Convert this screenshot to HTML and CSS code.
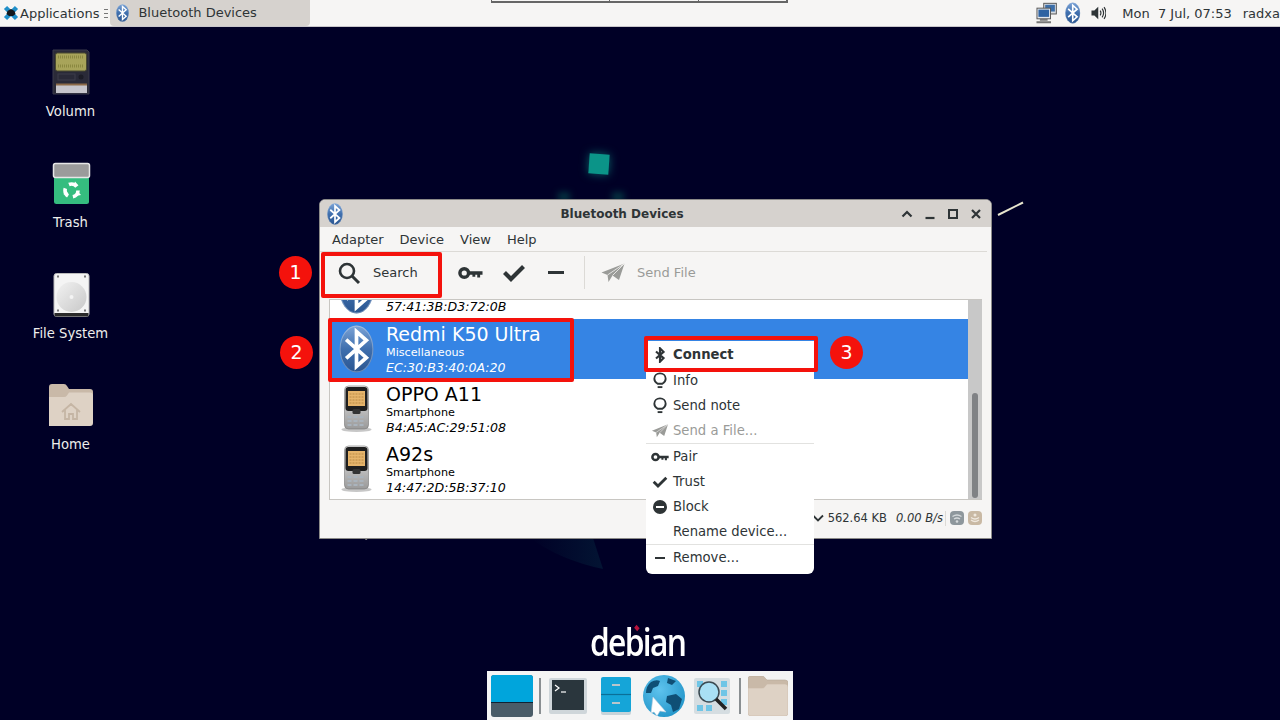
FILE: index.html
```html
<!DOCTYPE html>
<html lang="en">
<head>
    <meta charset="UTF-8">
    <meta name="viewport" content="width=device-width, initial-scale=1.0">
    <title>Bluetooth Devices</title>
    <link rel="stylesheet" href="styles.css">
</head>
<body>

    <!-- shared icons -->
    <svg class="defs" width="0" height="0">
        <defs>
            <linearGradient id="btBlue" x1="0" y1="0" x2="0" y2="1">
                <stop offset="0" stop-color="#7ba3d6"/>
                <stop offset="0.5" stop-color="#3f6fae"/>
                <stop offset="1" stop-color="#2a5590"/>
            </linearGradient>
            <linearGradient id="metal" x1="0" y1="0" x2="0" y2="1">
                <stop offset="0" stop-color="#e8e8e8"/>
                <stop offset="1" stop-color="#9a9a9a"/>
            </linearGradient>
            <linearGradient id="disc" x1="0" y1="0" x2="1" y2="1">
                <stop offset="0" stop-color="#f2f2f2"/>
                <stop offset="1" stop-color="#c8c8c8"/>
            </linearGradient>
            <linearGradient id="wpFade" x1="0" y1="0" x2="1" y2="0">
                <stop offset="0" stop-color="#000026"/>
                <stop offset="1" stop-color="#031433"/>
            </linearGradient>
            <radialGradient id="globe" cx="0.4" cy="0.35" r="0.8">
                <stop offset="0" stop-color="#5ec3ee"/>
                <stop offset="1" stop-color="#1b8fc4"/>
            </radialGradient>
        </defs>
        <symbol id="bt-badge" viewBox="0 0 32 44">
            <ellipse cx="16" cy="22" rx="15.5" ry="21.5" fill="url(#btBlue)"/>
            <ellipse cx="16" cy="22" rx="15" ry="21" fill="none" stroke="#dfe8f4" stroke-opacity=".35"/>
            <path d="M6.5 13.5 25 30 16 38V6l9 8L6.5 30.5" fill="none" stroke="#fff" stroke-width="3.4"/>
        </symbol>
        <symbol id="bt-rune" viewBox="0 0 12 18">
            <path d="M1.5 5 10 12.5 6 16.5V1.5l4 4L1.5 13" fill="none" stroke="currentColor" stroke-width="2.400"/>
        </symbol>
        <symbol id="phone" viewBox="0 0 32 48">
            <ellipse cx="16" cy="44.5" rx="15" ry="2.5" fill="#999" opacity=".55"/>
            <rect x="4" y="1" width="24" height="43" rx="4" fill="url(#metal)" stroke="#777" stroke-width=".6"/>
            <rect x="5" y="2" width="22" height="24" rx="3" fill="#1f1f1f"/>
            <rect x="7.500" y="6" width="17" height="15" fill="#e6b56c"/>
            <path d="M9 9h14M9 12h14M9 15h14M9 18h14" stroke="#b98a45" stroke-dasharray="2 1"/>
            <rect x="12" y="24" width="8" height="5" rx="1.500" fill="#333"/>
            <path d="M7 32h18M7 36h18M7 40h18" stroke="#aab4bd" stroke-width="2" stroke-dasharray="4 2"/>
        </symbol>
        <symbol id="bulb" viewBox="0 0 16 18">
            <path d="M5.5 12.5C3 11 2 9.500 2 7.200 2 4 4.600 1.500 8 1.500s6 2.500 6 5.700c0 2.300-1 3.800-3.500 5.300z" fill="none" stroke="#2e3436" stroke-width="2"/>
            <path d="M5.500 16h5" stroke="#2e3436" stroke-width="2"/>
        </symbol>
        <symbol id="key" viewBox="0 0 26 14">
            <circle cx="6.500" cy="7" r="4.500" fill="none" stroke="currentColor" stroke-width="3.600"/>
            <path d="M10 5.200h15.500v3.600h-2.500v3h-3v-3h-2v2h-3v-2H10z" fill="currentColor"/>
        </symbol>
        <symbol id="check" viewBox="0 0 24 18">
            <path d="M2.500 8.500 9 15 21.500 2.500" fill="none" stroke="currentColor" stroke-width="4.200"/>
        </symbol>
        <symbol id="plane" viewBox="0 0 24 20">
            <path d="M0.500 9.500 23.500 0.500 18 17 11.500 12.500 7.500 19 6.500 12z" fill="currentColor"/>
            <path d="M6.500 12 23.500 0.500 11.500 12.500" fill="none" stroke="#f6f5f4" stroke-width=".8"/>
        </symbol>
    </svg>

    <div class="desktop">
        <header class="panel">
            <div class="app-btn">
                <svg class="app-logo" viewBox="0 0 16 16">
                    <path d="M2.500 2.500 13.500 13.500M13.500 2.500 2.500 13.500" stroke="#1f8fc9" stroke-width="4.500"/>
                    <path d="M4.500 6 8 4l3.500 2 1 3-2.500 2H6L3.500 9z" fill="#14181c"/>
                </svg>
                <span>Applications</span>
            </div>
            <span class="app-more"></span>
            <div class="task-btn">
                <svg class="task-icon"><use href="#bt-badge"/></svg>
                <span>Bluetooth Devices</span>
            </div>
            <div class="workspace-strip">
                <span></span><span></span><span></span>
            </div>
            <div class="tray">
                <svg class="tray-net" viewBox="0 0 22 22">
                    <rect x="8" y="1" width="13" height="11" fill="#d8dde3" stroke="#555"/>
                    <rect x="9.500" y="2.500" width="10" height="7" fill="#3c6ea8"/>
                    <rect x="1" y="6" width="14" height="11" fill="#e4e8ec" stroke="#555"/>
                    <rect x="2.500" y="7.500" width="11" height="7.500" fill="#2f63a2"/>
                    <path d="M0.500 20.500h15M4 18h8" stroke="#777" stroke-width="2"/>
                </svg>
                <svg class="tray-bt"><use href="#bt-badge"/></svg>
                <svg class="tray-vol" viewBox="0 0 16 14">
                    <path d="M0.500 4.500h3l4-4v13l-4-4h-3z" fill="#2e3436"/>
                    <path d="M9.500 4.500q1.500 2.500 0 5M11.500 2.500q3 4.500 0 9M13.500 1q4 6 0 12" fill="none" stroke="#2e3436" stroke-width="1.200"/>
                </svg>
                <span class="clock">Mon&nbsp; 7 Jul, 07:53</span>
                <span class="user">radxa</span>
            </div>
        </header>

        <div class="desk-icons">
            <div class="desk-item">
                <svg class="desk-icon" viewBox="0 0 48 48">
                    <path d="M6 2h34l2 2v42H6z" fill="#2a2a38" stroke="#3a3a4a"/>
                    <rect x="8.500" y="5" width="31" height="18" rx="2" fill="#a8a45a" stroke="#4a4a30"/>
                    <path d="M11 9h26M11 18h26" stroke="#8a8840" stroke-width="3" stroke-dasharray="1 1"/>
                    <rect x="11" y="26" width="17" height="6" fill="none" stroke="#3c3c4a"/>
                    <circle cx="34" cy="29" r="2.500" fill="#1c1c26"/>
                    <rect x="9" y="36" width="31" height="9" fill="#c6c5cc"/>
                    <path d="M9 36.500h31" stroke="#8d6a48" stroke-width="2"/>
                </svg>
                <span>Volumn</span>
            </div>
            <div class="desk-item">
                <svg class="desk-icon" viewBox="0 0 48 48">
                    <rect x="7" y="15" width="35" height="30" rx="2.500" fill="#35bd7f"/>
                    <rect x="6.500" y="4.500" width="36" height="14" rx="2" fill="#9b9b9b" stroke="#e6e6e6" stroke-width="1.500"/>
                    <circle cx="24.500" cy="31.500" r="6.500" fill="none" stroke="#fff" stroke-width="3.600" stroke-dasharray="8.500 5.100"/>
                    <path d="M28 22.500l3.500 4-5 .5zM34 36l-5 1 1.500-5zM16.500 35.500l2.500-4.500 2.500 4z" fill="#fff"/>
                </svg>
                <span>Trash</span>
            </div>
            <div class="desk-item">
                <svg class="desk-icon" viewBox="0 0 48 48">
                    <rect x="7" y="3.500" width="35" height="43" rx="2.500" fill="#f4f4f4" stroke="#bbb"/>
                    <path d="M7.500 43h34v3.500h-34z" fill="#2a2a2a"/>
                    <circle cx="24.500" cy="27" r="15" fill="url(#disc)"/>
                    <circle cx="24.500" cy="27" r="2" fill="#f4f4f4"/>
                    <path d="M10 6.500h2M37 6.500h2M10 40.500h2M37 40.500h2" stroke="#777" stroke-width="2"/>
                </svg>
                <span>File System</span>
            </div>
            <div class="desk-item">
                <svg class="desk-icon desk-icon-wide" viewBox="0 0 44 44">
                    <path d="M0 4q0-3 3-3h12q2 0 3 2l2 3h21q3 0 3 3v8H0z" fill="#c9b9a8"/>
                    <path d="M0 14h15q2 0 3-1.500L20 9.500h21q3 0 3 3V40q0 3-3 3H0z" fill="#ded2c5"/>
                    <path d="M13 29l9-8 9 8M16 27v9h4v-5h4v5h4v-9" fill="none" stroke="#c5b5a4" stroke-width="1.800"/>
                </svg>
                <span>Home</span>
            </div>
        </div>

        <!-- bits of the wallpaper -->
        <div class="wp-square"></div>
        <div class="wp-glow wp-glow-a"></div>
        <div class="wp-glow wp-glow-b"></div>
        <svg class="wp-art" viewBox="0 0 1280 720">
            <path d="M998 215 1023 202.500" stroke="#e8e6cf" stroke-width="2"/>
            <path d="M530 538H593L603 569Q560 560 530 538z" fill="url(#wpFade)"/>
            <path d="M364 538h5l-3 2z" fill="#b8b8a8"/>
        </svg>

        <section class="win">
            <div class="win-title">
                <svg class="win-icon"><use href="#bt-badge"/></svg>
                <span class="win-name">Bluetooth Devices</span>
                <div class="win-btns">
                    <svg viewBox="0 0 12 12"><path d="M1.500 8.500 6 4l4.500 4.500" fill="none" stroke="#2e3436" stroke-width="2.200"/></svg>
                    <svg viewBox="0 0 12 12"><path d="M1.500 10h9" stroke="#2e3436" stroke-width="2.200"/></svg>
                    <svg viewBox="0 0 12 12"><rect x="2" y="2" width="8" height="8" fill="none" stroke="#2e3436" stroke-width="2"/></svg>
                    <svg viewBox="0 0 12 12"><path d="M2 2l8 8M10 2l-8 8" stroke="#2e3436" stroke-width="2.200"/></svg>
                </div>
            </div>
            <nav class="win-menu">
                <span>Adapter</span>
                <span>Device</span>
                <span>View</span>
                <span>Help</span>
            </nav>
            <div class="toolbar">
                <div class="tool tool-search">
                    <svg class="tool-glass" viewBox="0 0 24 24">
                        <circle cx="10" cy="10" r="7" fill="none" stroke="#2e3436" stroke-width="2.600"/>
                        <path d="M15 15l7 7" stroke="#2e3436" stroke-width="3"/>
                    </svg>
                    <span>Search</span>
                </div>
                <div class="tool"><svg class="ico-key"><use href="#key"/></svg></div>
                <div class="tool"><svg class="ico-check"><use href="#check"/></svg></div>
                <div class="tool tool-narrow"><span class="ico-minus"></span></div>
                <span class="tool-sep"></span>
                <div class="tool-send">
                    <svg class="ico-plane"><use href="#plane"/></svg>
                    <span>Send File</span>
                </div>
            </div>
            <div class="list-wrap">
                <div class="list">
                    <div class="row row-cut">
                        <svg class="row-icon"><use href="#bt-badge"/></svg>
                        <div class="row-text"><i>57:41:3B:D3:72:0B</i></div>
                    </div>
                    <div class="row row-active">
                        <svg class="row-icon"><use href="#bt-badge"/></svg>
                        <div class="row-text">
                            <b>Redmi K50 Ultra</b>
                            <small>Miscellaneous</small>
                            <i>EC:30:B3:40:0A:20</i>
                        </div>
                    </div>
                    <div class="row">
                        <svg class="row-icon"><use href="#phone"/></svg>
                        <div class="row-text">
                            <b>OPPO A11</b>
                            <small>Smartphone</small>
                            <i>B4:A5:AC:29:51:08</i>
                        </div>
                    </div>
                    <div class="row">
                        <svg class="row-icon"><use href="#phone"/></svg>
                        <div class="row-text">
                            <b>A92s</b>
                            <small>Smartphone</small>
                            <i>14:47:2D:5B:37:10</i>
                        </div>
                    </div>
                </div>
                <div class="scroll"><span class="thumb"></span></div>
            </div>
            <footer class="status">
                <svg class="st-arrow" viewBox="0 0 12 8"><path d="M1 1.500 6 6.500l5-5" fill="none" stroke="#2e3436" stroke-width="1.800"/></svg>
                <span class="st-size">562.64 KB</span>
                <i class="st-rate">0.00 B/s</i>
                <span class="st-sep"></span>
                <svg class="led" viewBox="0 0 14 14">
                    <rect width="14" height="14" rx="4" fill="#8e979c"/>
                    <path d="M2.500 5.500q4.500-3 9 0M4 8q3-2 6 0" fill="none" stroke="#d5d9db" stroke-width="1.300"/>
                    <circle cx="7" cy="10.500" r="1.300" fill="#d5d9db"/>
                </svg>
                <svg class="led led-b" viewBox="0 0 14 14">
                    <rect width="14" height="14" rx="4" fill="#c9b9a4"/>
                    <path d="M3 9q4 3 8 0M3 6.500q4 3 8 0" fill="none" stroke="#efe8de" stroke-width="1.300"/>
                    <circle cx="7" cy="4" r="1.500" fill="#efe8de"/>
                </svg>
            </footer>
        </section>

        <ul class="ctx">
            <li class="ctx-main"><svg class="ctx-rune"><use href="#bt-rune"/></svg>Connect</li>
            <li><svg class="ctx-bulb"><use href="#bulb"/></svg>Info</li>
            <li><svg class="ctx-bulb"><use href="#bulb"/></svg>Send note</li>
            <li class="ctx-off"><svg class="ctx-plane"><use href="#plane"/></svg>Send a File...</li>
            <li class="ctx-sep"></li>
            <li><svg class="ctx-key"><use href="#key"/></svg>Pair</li>
            <li><svg class="ctx-check"><use href="#check"/></svg>Trust</li>
            <li><span class="ctx-block"></span>Block</li>
            <li><span class="ctx-none"></span>Rename device...</li>
            <li class="ctx-sep"></li>
            <li><span class="ctx-minus"></span>Remove...</li>
        </ul>

        <!-- tutorial marks -->
        <span class="mark mark-search"></span>
        <span class="mark mark-row"></span>
        <span class="mark mark-connect"></span>
        <span class="step step-1">1</span>
        <span class="step step-2">2</span>
        <span class="step step-3">3</span>

        <div class="debian">debian<span class="debian-dot"></span></div>

        <div class="dock">
            <svg class="dock-show" viewBox="0 0 42 42">
                <rect width="42" height="42" rx="3" fill="#4a5c68"/>
                <path d="M0 3q0-3 3-3h36q3 0 3 3v25H0z" fill="#00a5dc"/>
                <path d="M0 27.500h42" stroke="#123" stroke-width="1"/>
            </svg>
            <span class="dock-sep"></span>
            <svg class="dock-term" viewBox="0 0 38 36">
                <rect width="38" height="36" rx="2" fill="#cfd6da"/>
                <rect x="3" y="2" width="32" height="30" fill="#2a363d"/>
                <path d="M6 7l4 3-4 3" fill="none" stroke="#fff" stroke-width="1.200"/>
                <path d="M12 14h5" stroke="#fff" stroke-width="1.200"/>
            </svg>
            <svg class="dock-files" viewBox="0 0 30 38">
                <rect y="1" width="30" height="37" rx="2" fill="#c7d3d9"/>
                <rect y="0" width="30" height="35" rx="2" fill="#15a5d8"/>
                <path d="M0 17.500h30" stroke="#0b6f98" stroke-width="1.200"/>
                <path d="M11 8h8M11 26h8" stroke="#b8c6cc" stroke-width="2"/>
            </svg>
            <svg class="dock-globe" viewBox="0 0 42 42">
                <circle cx="21" cy="21" r="21" fill="url(#globe)"/>
                <path d="M8 7q5-3 9-1l-2 5-5 2-2 5-5 0q0-7 5-11zM25 3l8 3-4 4-5-2zM24 21l9-2 6 5-3 10-6 3-2-7-5-3z" fill="#0f4f75"/>
                <path d="M10 22l13 15-6-1-3 5-3-4-3 1z" fill="#fff" stroke="#bcd" stroke-width=".6"/>
            </svg>
            <svg class="dock-find" viewBox="0 0 36 36">
                <rect width="36" height="36" rx="2" fill="#d5dde1"/>
                <path d="M3 3h6v6H3zM27 3h6v6h-6zM27 12h6v6h-6zM27 21h6v6h-6zM3 27h6v6H3zM12 27h6v6h-6z" fill="#6fc5e6"/>
                <circle cx="15" cy="14" r="10" fill="#a9e0f5" stroke="#3b4a52" stroke-width="1.500"/>
                <path d="M22 21l10 10" stroke="#222" stroke-width="3.500"/>
            </svg>
            <span class="dock-sep dock-sep-b"></span>
            <svg class="dock-folder" viewBox="0 0 40 40">
                <path d="M0 3q0-3 3-3h11q2 0 3 2l2 2h18q3 0 3 3v8H0z" fill="#c9b9a8" stroke="#b7a797" stroke-width=".6"/>
                <path d="M0 12h14q2 0 3-1.500L19 8h18q3 0 3 3v26q0 3-3 3H3q-3 0-3-3z" fill="#ded2c5" stroke="#c9b9a8" stroke-width=".6"/>
            </svg>
        </div>
    </div>

</body>
</html>
```

FILE: styles.css
```css
* {
    box-sizing: border-box;
}
body {
    margin: 0;
    font-family: "DejaVu Sans", sans-serif;
    font-size: 13px;
    color: #2e3436;
}
.defs {
    position: absolute;
}
.desktop {
    position: relative;
    width: 1280px;
    height: 720px;
    overflow: hidden;
    background-color: #000026;
}

/* top panel */
.panel {
    display: flex;
    align-items: center;
    height: 27px;
    background-color: #f6f5f4;
    border-bottom: 1px solid #c8c6ca;
}
.app-btn {
    display: flex;
    align-items: center;
    gap: 1px;
    padding-left: 3px;
}
.app-logo {
    width: 16px;
    height: 16px;
}
.app-more {
    width: 4px;
    height: 9px;
    margin: 0 2px 0 5px;
    border-top: 1px solid #777;
    border-bottom: 1px solid #777;
    background: linear-gradient(#777, #777) center / 100% 1px no-repeat;
}
.task-btn {
    display: flex;
    align-items: center;
    width: 200px;
    height: 26px;
    margin-top: -1px;
    padding-left: 6px;
    gap: 9px;
    background-color: #d6d2ce;
    border-radius: 0 0 4px 4px;
}
.task-icon {
    width: 13px;
    height: 18px;
}
.workspace-strip {
    position: absolute;
    left: 491px;
    top: 0;
    display: flex;
    width: 297px;
    height: 3px;
    border: 1px solid #666;
    border-top: none;
    border-bottom-width: 2px;
}
.workspace-strip span {
    width: 89px;
    border-right: 1px solid #666;
}
.workspace-strip span:first-child {
    width: 119px;
}
.tray {
    display: flex;
    align-items: center;
    margin-left: auto;
    width: 244px;
    flex-shrink: 0;
    white-space: nowrap;
    overflow: hidden;
}
.tray-net {
    width: 22px;
    height: 22px;
}
.tray-bt {
    width: 16px;
    height: 22px;
    margin-left: 8px;
}
.tray-vol {
    width: 16px;
    height: 14px;
    margin-left: 10px;
}
.clock {
    margin-left: 16px;
}
.user {
    margin-left: 11px;
}

/* desktop icons */
.desk-icons {
    display: flex;
    flex-direction: column;
    width: 141px;
    padding-top: 21px;
}
.desk-item {
    display: flex;
    flex-direction: column;
    align-items: center;
    height: 111px;
    color: #eeeeec;
    font-size: 13.200px;
}
.desk-icon {
    width: 48px;
    height: 48px;
    margin-bottom: 8px;
}
.desk-icon-wide {
    width: 44px;
    height: 44px;
    margin: 2px 0 10px;
}

/* wallpaper */
.wp-square {
    position: absolute;
    left: 589px;
    top: 154px;
    width: 20px;
    height: 20px;
    background-color: #0b9488;
    transform: rotate(4deg);
    box-shadow: 0 0 10px #0b5f66;
}
.wp-glow {
    position: absolute;
    top: 192px;
    width: 12px;
    height: 10px;
    background-color: #03303f;
    filter: blur(3px);
}
.wp-glow-a {
    left: 558px;
}
.wp-glow-b {
    left: 612px;
}
.wp-art {
    position: absolute;
    left: 0;
    top: 0;
    width: 1280px;
    height: 720px;
}

/* bluetooth window */
.win {
    position: absolute;
    left: 319px;
    top: 199px;
    display: flex;
    flex-direction: column;
    width: 673px;
    height: 340px;
    background-color: #f6f5f4;
    border: 1px solid #8b8a88;
    border-radius: 6px 6px 0 0;
}
.win-title {
    display: flex;
    align-items: center;
    height: 27px;
    padding: 0 9px 0 7px;
    background-color: #d6d2ce;
    border-radius: 5px 5px 0 0;
}
.win-icon {
    width: 16px;
    height: 22px;
}
.win-name {
    flex: 1;
    text-align: center;
    font-weight: bold;
    font-size: 12px;
}
.win-btns {
    display: flex;
    gap: 11px;
}
.win-btns svg {
    width: 12px;
    height: 12px;
}
.win-menu {
    display: flex;
    align-items: center;
    gap: 16px;
    height: 25px;
    margin-right: 4px;
    padding-left: 12px;
    border-bottom: 1px solid #dcdad6;
}
.toolbar {
    display: flex;
    align-items: center;
    height: 47px;
    padding: 0 0 6px 9px;
}
.tool {
    display: flex;
    align-items: center;
    justify-content: center;
    width: 44px;
    height: 40px;
}
.tool-narrow {
    width: 40px;
}
.tool-search {
    justify-content: flex-start;
    width: 119px;
    padding-left: 8px;
    gap: 12px;
}
.tool-glass {
    width: 24px;
    height: 24px;
}
.ico-key {
    width: 25px;
    height: 14px;
}
.ico-check {
    width: 24px;
    height: 18px;
}
.ico-minus {
    width: 16px;
    height: 3px;
    background-color: #2e3436;
}
.tool-sep {
    width: 1px;
    height: 33px;
    margin: 0 16px 0 8px;
    background-color: #dcdad6;
}
.tool-send {
    display: flex;
    align-items: center;
    gap: 12px;
    color: #9a9b98;
}
.ico-plane {
    width: 24px;
    height: 20px;
}
.list-wrap {
    display: flex;
    height: 201px;
    margin: 0 9px;
    border-top: 1px solid #c8c6c2;
    border-bottom: 1px solid #c8c6c2;
}
.list {
    flex: 1;
    overflow: hidden;
    background-color: #fff;
    border-left: 1px solid #c8c6c2;
}
.row {
    display: flex;
    align-items: center;
    gap: 9px;
    height: 60px;
    padding-left: 6px;
    color: #000;
}
.row-cut {
    align-items: flex-start;
    height: 19px;
    overflow: hidden;
}
.row-cut .row-icon {
    margin-top: -34px;
}
.row-cut .row-text {
    margin-top: -1px;
}
.row-active {
    background-color: #3584e4;
    color: #fff;
}
.row-icon {
    flex-shrink: 0;
    width: 41px;
    height: 48px;
}
.row-text {
    display: flex;
    flex-direction: column;
}
.row-text b {
    font-weight: normal;
    font-size: 19px;
    line-height: 22px;
}
.row-text small {
    font-size: 11.200px;
    line-height: 15px;
}
.row-text i {
    font-size: 12.600px;
    line-height: 16px;
}
.scroll {
    position: relative;
    width: 14px;
    background-color: #c8c8c8;
}
.thumb {
    position: absolute;
    left: 4px;
    top: 93px;
    width: 6px;
    height: 105px;
    border-radius: 3px;
    background-color: #808285;
}
.status {
    display: flex;
    align-items: center;
    justify-content: flex-end;
    flex: 1;
    padding: 0 9px 2px 0;
    font-size: 11.500px;
}
.st-arrow {
    width: 12px;
    height: 8px;
    margin-right: 4px;
}
.st-rate {
    margin-left: 9px;
}
.st-sep {
    width: 1px;
    height: 15px;
    margin: 0 4px 0 2px;
    background-color: #dcdad6;
}
.led {
    width: 14px;
    height: 14px;
}
.led-b {
    margin-left: 4px;
}

/* context menu */
.ctx {
    position: absolute;
    left: 646px;
    top: 341px;
    width: 168px;
    height: 233px;
    margin: 0;
    padding: 0;
    list-style: none;
    background-color: #fff;
    border-radius: 0 0 6px 6px;
    font-size: 13.200px;
}
.ctx li {
    display: flex;
    align-items: center;
    height: 25px;
    padding-left: 5px;
}
.ctx .ctx-main {
    height: 27px;
    font-weight: bold;
}
.ctx .ctx-off {
    color: #9a9b98;
}
.ctx .ctx-sep {
    height: 1px;
    padding: 0;
    background-color: #e2e2e0;
}
.ctx svg,
.ctx-block,
.ctx-none,
.ctx-minus {
    flex-shrink: 0;
    margin-right: 4px;
}
.ctx-rune {
    width: 18px;
    height: 16px;
}
.ctx-bulb {
    width: 18px;
    height: 17px;
}
.ctx-plane {
    width: 18px;
    height: 14px;
}
.ctx-key {
    width: 18px;
    height: 10px;
}
.ctx-check {
    width: 18px;
    height: 12px;
}
.ctx-block {
    position: relative;
    width: 14px;
    height: 14px;
    margin: 0 6px 0 2px;
    border-radius: 50%;
    background-color: #2e3436;
}
.ctx-block::after {
    content: "";
    position: absolute;
    left: 3px;
    top: 6px;
    width: 8px;
    height: 2px;
    background-color: #fff;
}
.ctx-none {
    width: 18px;
}
.ctx-minus {
    width: 10px;
    height: 2px;
    margin: 0 8px 0 4px;
    background-color: #2e3436;
}

/* tutorial marks */
.mark {
    position: absolute;
    border: 4px solid #f4120c;
    border-radius: 2px;
}
.mark-search {
    left: 321px;
    top: 252px;
    width: 121px;
    height: 46px;
}
.mark-row {
    left: 328px;
    top: 318px;
    width: 246px;
    height: 64px;
}
.mark-connect {
    left: 644px;
    top: 336px;
    width: 174px;
    height: 36px;
}
.step {
    position: absolute;
    width: 33px;
    height: 33px;
    border-radius: 50%;
    background-color: #f4120c;
    color: #fff;
    font-size: 19px;
    line-height: 33px;
    text-align: center;
}
.step-1 {
    left: 279px;
    top: 256px;
}
.step-2 {
    left: 280px;
    top: 336px;
}
.step-3 {
    left: 830px;
    top: 336px;
}

/* logo and dock */
.debian {
    position: absolute;
    left: 590px;
    top: 620px;
    color: #fff;
    font-family: "Open Sans", sans-serif;
    font-size: 37px;
    font-weight: 600;
    line-height: 44px;
    letter-spacing: -2px;
    transform-origin: left center;
    transform: scaleX(.86);
}
.debian-dot {
    position: absolute;
    left: 50px;
    top: 5px;
    width: 9px;
    height: 10px;
    background-color: #000026;
}
.debian-dot::after {
    content: "";
    position: absolute;
    left: 2px;
    top: 1px;
    width: 5px;
    height: 4px;
    background-color: #b8123c;
    transform: rotate(45deg);
}
.dock {
    position: absolute;
    left: 487px;
    top: 671px;
    display: flex;
    align-items: center;
    width: 306px;
    height: 49px;
    background-color: #f4f4f4;
}
.dock svg {
    flex-shrink: 0;
}
.dock-show {
    width: 42px;
    height: 42px;
    margin-left: 4px;
}
.dock-sep {
    width: 2px;
    height: 36px;
    margin: 0 8px 0 6px;
    background-color: #8a8f92;
}
.dock-term {
    width: 38px;
    height: 36px;
    margin-left: 0;
}
.dock-files {
    width: 30px;
    height: 38px;
    margin-left: 14px;
}
.dock-globe {
    width: 42px;
    height: 42px;
    margin-left: 12px;
}
.dock-find {
    width: 36px;
    height: 36px;
    margin-left: 9px;
}
.dock-sep-b {
    margin: 0 7px 0 9px;
}
.dock-folder {
    width: 40px;
    height: 40px;
}
```
